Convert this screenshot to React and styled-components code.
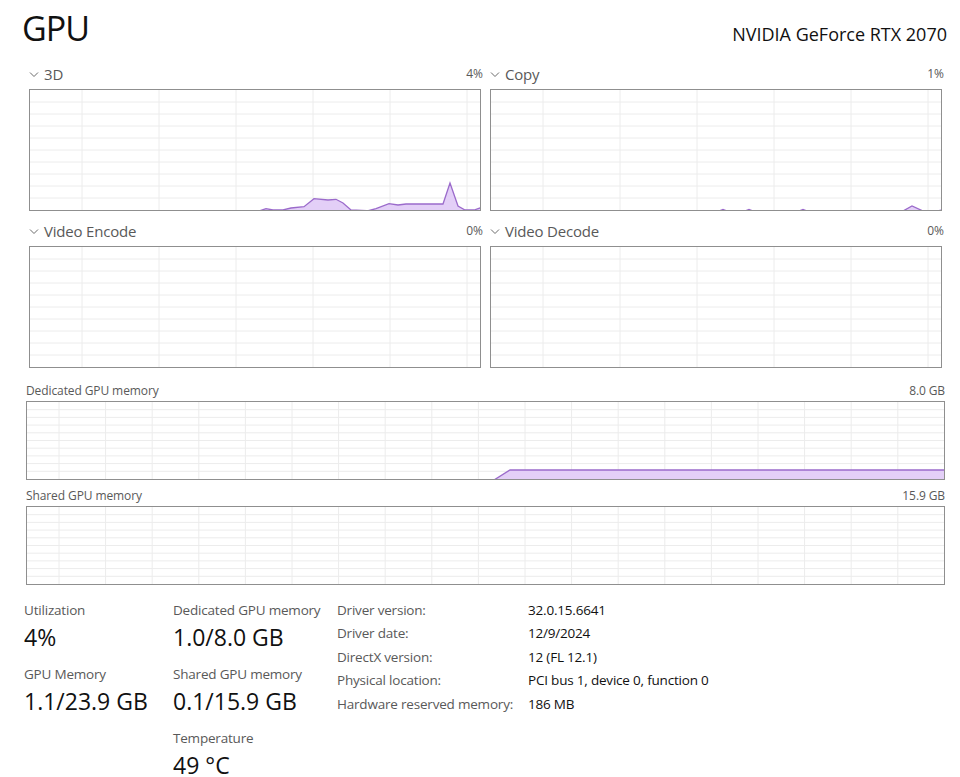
import React from "react";
import styled, { createGlobalStyle } from "styled-components";

const GlobalStyle = createGlobalStyle`
  body {
    margin: 0;
    background: #ffffff;
    font-family: "Open Sans", "Noto Sans", sans-serif;
    color: #1a1a1a;
  }
`;

const colors = {
  label: "#595959",
  border: "#8f8f8f",
  grid: "#ececec",
  line: "#9b6bcb",
  fill: "#e3cff7",
};

// graph samples, in box pixels
const samples3d = [
  [229, 121], [236, 118.7], [243, 120], [253, 120], [261, 118], [274, 116.7],
  [284, 108.7], [298, 110], [306, 109.3], [313, 113], [321, 120], [338, 120.7],
  [346, 118.7], [359, 113.7], [368, 115], [376, 114], [413, 114], [420, 93],
  [428, 116], [435, 120], [444, 120], [451, 117.7],
];

const samplesCopy = [
  [228, 121], [232, 119.5], [236, 121], [254, 121], [258, 119.5], [262, 121],
  [308, 121], [312, 119.5], [316, 121], [412, 121], [421, 116], [432, 121],
  [446, 121], [451, 120],
];

const samplesDedicated = [
  [467, 78], [483, 68], [918, 68],
];

const Chart = ({ width, height, cols, offset, rows, points }) => {
  const vLines = [];
  for (let x = offset; x < width; x += cols) vLines.push(x);
  const hLines = [];
  for (let i = 1; i < rows; i++) hLines.push((height / rows) * i);
  const line = points ? points.map((p) => p.join(",")).join(" ") : "";
  const area = points
    ? `${points[0][0]},${height} ${line} ${points[points.length - 1][0]},${height}`
    : "";
  return (
    <GraphSvg viewBox={`0 0 ${width} ${height}`} width={width} height={height}>
      {hLines.map((y) => (
        <line key={`h${y}`} x1="0" x2={width} y1={y} y2={y} stroke={colors.grid} />
      ))}
      {vLines.map((x) => (
        <line key={`v${x}`} x1={x} x2={x} y1="0" y2={height} stroke={colors.grid} />
      ))}
      {points && (
        <>
          <polygon points={area} fill={colors.fill} />
          <polyline points={line} fill="none" stroke={colors.line} strokeWidth="1.3" />
        </>
      )}
    </GraphSvg>
  );
};

const Chevron = () => (
  <svg width="10" height="7" viewBox="0 0 10 7">
    <path d="M1 1.5 L5 5.5 L9 1.5" fill="none" stroke="#6b6b6b" strokeWidth="1" />
  </svg>
);

const EngineGraph = ({ name, value, points }) => (
  <Engine>
    <EngineHead>
      <EngineName>
        <Chevron />
        {name}
      </EngineName>
      <Percent>{value}</Percent>
    </EngineHead>
    <GraphBox>
      <Chart width={450} height={120} cols={77} offset={52} rows={10} points={points} />
    </GraphBox>
  </Engine>
);

const MemoryGraph = ({ name, value, points }) => (
  <Memory>
    <MemoryHead>
      <span>{name}</span>
      <span>{value}</span>
    </MemoryHead>
    <GraphBox>
      <Chart width={917} height={77} cols={46.6} offset={32} rows={10} points={points} />
    </GraphBox>
  </Memory>
);

const Stat = ({ label, value }) => (
  <StatBlock>
    <StatLabel>{label}</StatLabel>
    <StatValue>{value}</StatValue>
  </StatBlock>
);

const details = [
  ["Driver version:", "32.0.15.6641"],
  ["Driver date:", "12/9/2024"],
  ["DirectX version:", "12 (FL 12.1)"],
  ["Physical location:", "PCI bus 1, device 0, function 0"],
  ["Hardware reserved memory:", "186 MB"],
];

const App = () => (
  <Page>
    <GlobalStyle />
    <Header>
      <Title>GPU</Title>
      <Model>NVIDIA GeForce RTX 2070</Model>
    </Header>
    <EngineGrid>
      <EngineGraph name="3D" value="4%" points={samples3d} />
      <EngineGraph name="Copy" value="1%" points={samplesCopy} />
      <EngineGraph name="Video Encode" value="0%" />
      <EngineGraph name="Video Decode" value="0%" />
    </EngineGrid>
    <MemoryList>
      <MemoryGraph name="Dedicated GPU memory" value="8.0 GB" points={samplesDedicated} />
      <MemoryGraph name="Shared GPU memory" value="15.9 GB" />
    </MemoryList>
    <Stats>
      <StatColumn $width={149}>
        <Stat label="Utilization" value="4%" />
        <Stat label="GPU Memory" value="1.1/23.9 GB" />
      </StatColumn>
      <StatColumn $width={164}>
        <Stat label="Dedicated GPU memory" value="1.0/8.0 GB" />
        <Stat label="Shared GPU memory" value="0.1/15.9 GB" />
        <Stat label="Temperature" value="49 °C" />
      </StatColumn>
      <Details>
        {details.map(([k, v]) => (
          <React.Fragment key={k}>
            <DetailKey>{k}</DetailKey>
            <DetailValue>{v}</DetailValue>
          </React.Fragment>
        ))}
      </Details>
    </Stats>
  </Page>
);

export default App;

const Page = styled.div`
  width: 960px;
  height: 777px;
  overflow: hidden;
  box-sizing: border-box;
  padding: 0 13px 0 22px;
`;

const Header = styled.div`
  display: flex;
  justify-content: space-between;
  align-items: baseline;
  height: 58px;
  padding-top: 6px;
  box-sizing: border-box;
`;

const Title = styled.div`
  font-size: 34px;
  line-height: 44px;
  letter-spacing: -1px;
  color: #111;
`;

const Model = styled.div`
  font-size: 18px;
  color: #111;
`;

const EngineGrid = styled.div`
  display: grid;
  grid-template-columns: 452px 452px;
  column-gap: 9px;
  row-gap: 4px;
  padding-left: 7px;
`;

const Engine = styled.div`
  display: flex;
  flex-direction: column;
`;

const EngineHead = styled.div`
  display: flex;
  justify-content: space-between;
  align-items: center;
  height: 31px;
  color: ${colors.label};
`;

const EngineName = styled.div`
  display: flex;
  align-items: center;
  gap: 5px;
  font-size: 15px;
  letter-spacing: -0.2px;

  svg {
    margin-top: 1px;
  }
`;

const Percent = styled.div`
  font-size: 12px;
  margin-right: -2px;
`;

const GraphBox = styled.div`
  border: 1px solid ${colors.border};
  line-height: 0;
`;

const GraphSvg = styled.svg`
  display: block;
`;

const MemoryList = styled.div`
  display: flex;
  flex-direction: column;
  gap: 5px;
  padding-left: 4px;
  margin-top: 12px;
`;

const Memory = styled.div`
  display: flex;
  flex-direction: column;
  width: 919px;
`;

const MemoryHead = styled.div`
  display: flex;
  justify-content: space-between;
  align-items: center;
  height: 21px;
  font-size: 12px;
  letter-spacing: -0.1px;
  color: ${colors.label};
`;

const Stats = styled.div`
  display: flex;
  margin-top: 13px;
  padding-left: 2px;
`;

const StatColumn = styled.div`
  display: flex;
  flex-direction: column;
  gap: 10px;
  padding-top: 2px;
  width: ${(p) => p.$width}px;
`;

const StatBlock = styled.div`
  display: flex;
  flex-direction: column;
`;

const StatLabel = styled.div`
  font-size: 13.5px;
  line-height: 20px;
  letter-spacing: -0.2px;
  color: ${colors.label};
`;

const StatValue = styled.div`
  font-size: 23px;
  line-height: 34px;
  color: #111;
`;

const Details = styled.div`
  display: grid;
  grid-template-columns: 191px auto;
  grid-auto-rows: 23.5px;
  align-items: center;
  font-size: 13.5px;
  letter-spacing: -0.2px;
`;

const DetailKey = styled.div`
  color: ${colors.label};
`;

const DetailValue = styled.div`
  color: #111;
`;
